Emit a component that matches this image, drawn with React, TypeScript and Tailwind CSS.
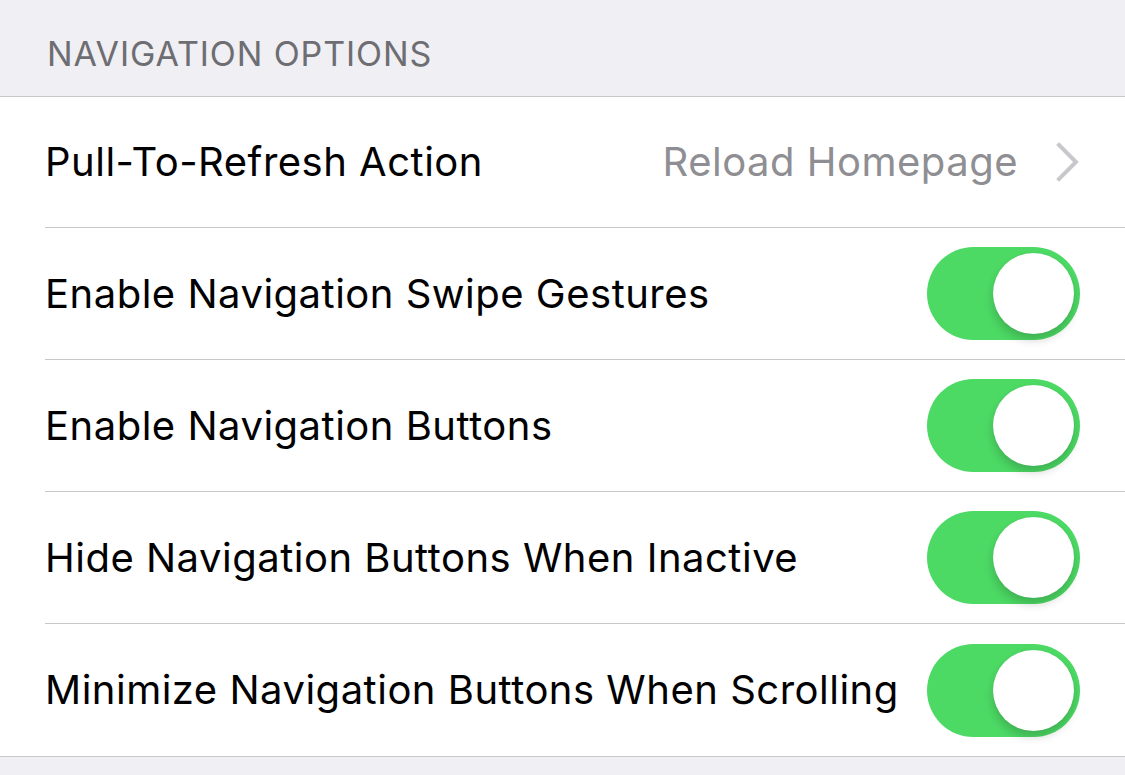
import React from "react";

const rows = [
  "Enable Navigation Swipe Gestures",
  "Enable Navigation Buttons",
  "Hide Navigation Buttons When Inactive",
  "Minimize Navigation Buttons When Scrolling",
];

function Toggle() {
  return (
    <div className="relative w-[153px] h-[93px] rounded-full bg-[#4cd964] shrink-0">
      <div className="absolute right-[6px] top-[6px] w-[81px] h-[81px] rounded-full bg-white shadow-[0_6px_10px_rgba(0,0,0,0.18),0_0_1px_rgba(0,0,0,0.1)]" />
    </div>
  );
}

export default function App() {
  return (
    <div
      className="w-[1125px] h-[775px] bg-[#efeff4] overflow-hidden"
      style={{ fontFamily: "Inter, 'Liberation Sans', sans-serif" }}
    >
      <div className="h-[96px] flex items-end pb-[25px] pl-[47px]">
        <span className="text-[34px] leading-none tracking-[0.9px] text-[#6d6d72]">
          NAVIGATION OPTIONS
        </span>
      </div>
      <div className="bg-white border-y border-[#c8c7cc]">
        <div className="pl-[45px]">
          <div className="h-[131px] flex items-center justify-between pr-[45px] border-b border-[#c8c7cc]">
            <span className="text-[40px] tracking-[0.5px] text-black">Pull-To-Refresh Action</span>
            <div className="flex items-center gap-[38px]">
              <span className="text-[40px] tracking-[0.5px] text-[#8e8e93]">Reload Homepage</span>
              <svg width="24" height="40" viewBox="0 0 24 40" fill="none">
                <path d="M3 3 L20 20 L3 37" stroke="#c7c7cc" strokeWidth="4" strokeLinecap="square" />
              </svg>
            </div>
          </div>
          {rows.map((label, i) => (
            <div
              key={label}
              className={
                "h-[132px] flex items-center justify-between pr-[45px] " +
                (i < rows.length - 1 ? "border-b border-[#c8c7cc]" : "")
              }
            >
              <span className="text-[40px] tracking-[0.5px] text-black">{label}</span>
              <Toggle />
            </div>
          ))}
        </div>
      </div>
    </div>
  );
}
